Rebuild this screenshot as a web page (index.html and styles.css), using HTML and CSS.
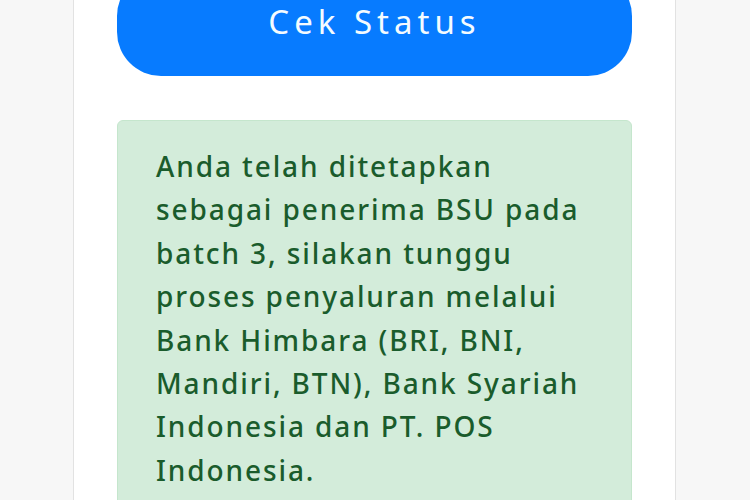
FILE: index.html
```html
<!DOCTYPE html>
<html lang="id">
<head>
<meta charset="utf-8">
<title>Cek Status BSU</title>
<link rel="stylesheet" href="styles.css">
</head>
<body>
<main class="card">
  <button class="btn-status" type="button">Cek Status</button>
  <div class="alert-success">
    <p>Anda telah ditetapkan sebagai penerima BSU pada batch 3, silakan tunggu proses penyaluran melalui Bank Himbara (BRI, BNI, Mandiri, BTN), Bank Syariah Indonesia dan PT. POS Indonesia.</p>
  </div>
</main>
</body>
</html>
```
FILE: styles.css
```css
html, body {
  margin: 0;
  padding: 0;
  height: 100%;
  overflow: hidden;
}
body {
  background: #f7f7f7;
  font-family: "Noto Sans", "Open Sans", sans-serif;
}
.card {
  box-sizing: border-box;
  width: 603px;
  margin: 0 0 0 73px;
  min-height: 600px;
  background: #ffffff;
  border-left: 1px solid #e2e2e2;
  border-right: 1px solid #e2e2e2;
  padding: 0 43px;
}
.btn-status {
  display: block;
  width: 100%;
  height: 104px;
  margin-top: -28px;
  border: none;
  border-radius: 44px;
  background: #077bff;
  color: #f4fbff;
  font-family: "Noto Sans", "Open Sans", sans-serif;
  font-size: 33px;
  letter-spacing: 5px;
  padding: 0 0 6px 0;
}
.alert-success {
  margin-top: 44px;
  background: #d3ecda;
  border: 1px solid #c5e6cd;
  border-radius: 6px;
  padding: 24px 36px 40px 38px;
  color: #1a5c2c;
}
.alert-success p {
  margin: 0;
  font-size: 28px;
  font-weight: 500;
  line-height: 43.4px;
  letter-spacing: 1.9px;
}
```
